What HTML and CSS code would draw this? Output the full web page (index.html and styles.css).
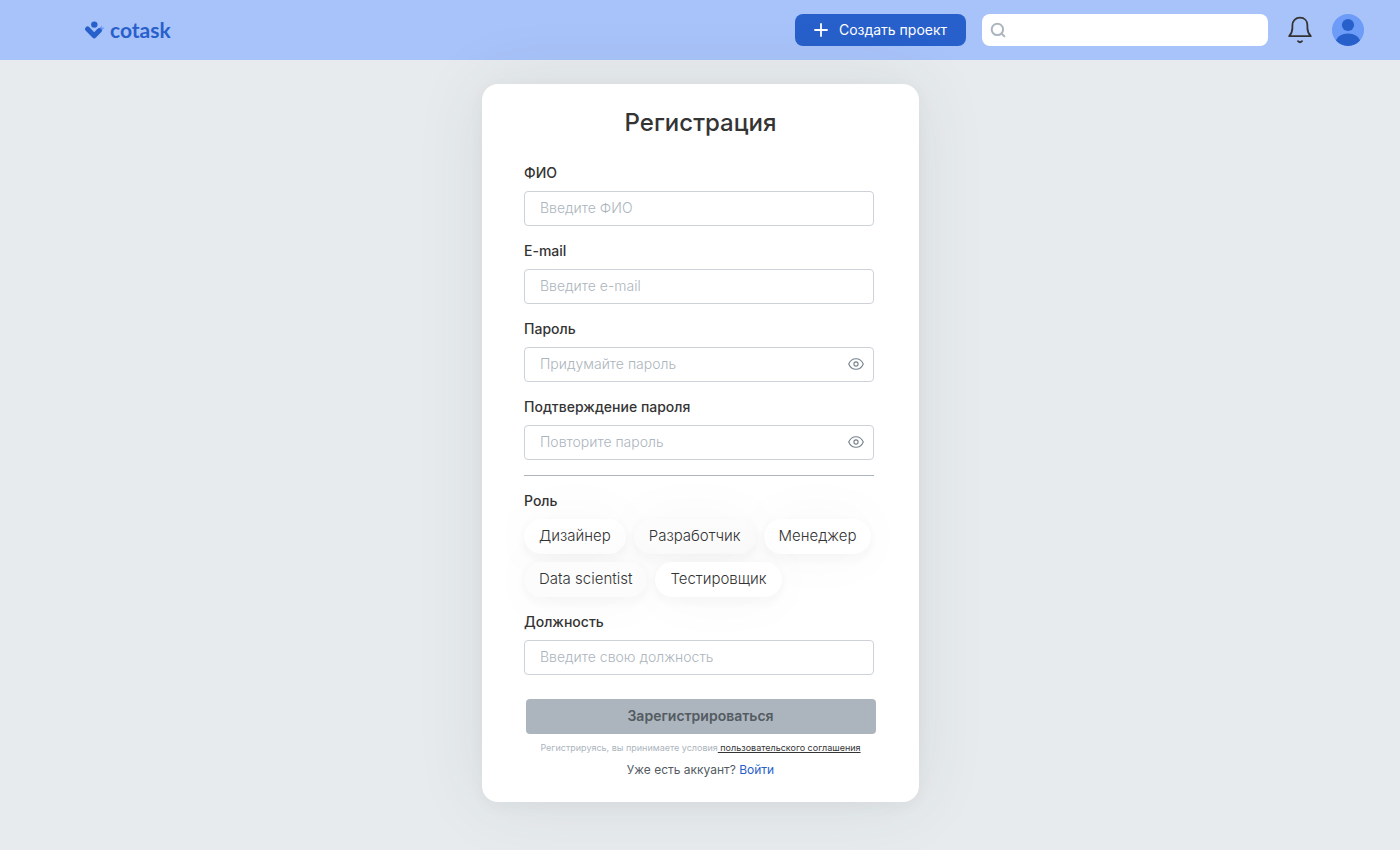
FILE: index.html
```html
<!DOCTYPE html>
<html lang="ru">
<head>
<meta charset="utf-8">
<meta name="viewport" content="width=device-width, initial-scale=1">
<title>Регистрация — cotask</title>
<link rel="stylesheet" href="styles.css">
</head>
<body>
<header class="topbar">
  <a class="logo" href="#">
    <svg class="logo-mark" width="20" height="18" viewBox="0 0 20 18" aria-hidden="true">
      <path d="M12.400 9L17 4.400V6.500H19.600L14 12.800Z" fill="#6c9cf8"/>
      <path d="M2.600 8L9.200 14.800L14.300 9.600" fill="none" stroke="#2860cb" stroke-width="5" stroke-linecap="round" stroke-linejoin="round"/>
      <circle cx="9.300" cy="4.200" r="3.900" fill="#a8c3f9"/>
      <circle cx="9.300" cy="3.600" r="3.200" fill="#2860cb"/>
    </svg>
    <span>cotask</span>
  </a>
  <div class="tools">
    <button class="create" type="button">
      <svg width="14" height="14" viewBox="0 0 14 14" aria-hidden="true"><path d="M7 1v12M1 7h12" stroke="#fff" stroke-width="1.800" stroke-linecap="round"/></svg>
      <span>Создать проект</span>
    </button>
    <label class="search">
      <svg width="16" height="16" viewBox="0 0 16 16" aria-hidden="true"><circle cx="7.400" cy="7.400" r="5.700" fill="none" stroke="#acb5bd" stroke-width="2"/><path d="M11.600 11.600L14.300 14.200" stroke="#acb5bd" stroke-width="2" stroke-linecap="round"/></svg>
      <input type="search" aria-label="Поиск">
    </label>
    <button class="bell" type="button" aria-label="Уведомления">
      <svg width="24" height="28" viewBox="0 0 24 28" fill="none" stroke="#343434" stroke-width="1.800" stroke-linecap="round" stroke-linejoin="round" aria-hidden="true"><path d="M1.200 20.200C3.500 17.500 4.400 15.500 4.400 12V9.200C4.400 4.800 7.600 1.700 12 1.700S19.400 4.800 19.400 9.200V12C19.400 15.500 20.300 17.500 22.800 20.200Z"/><path d="M10 25.200Q12 27.200 14 25.200"/></svg>
    </button>
    <button class="avatar" type="button" aria-label="Профиль">
      <svg width="32" height="32" viewBox="0 0 32 32" aria-hidden="true"><circle cx="16" cy="16" r="16" fill="#6c9cf8"/><circle cx="16" cy="11" r="6.100" fill="#2860cb"/><path d="M4 26.500C5.400 22.400 9.700 19.500 16 19.500S26.600 22.400 28 26.500A16 16 0 0 1 4 26.500Z" fill="#2860cb"/></svg>
    </button>
  </div>
</header>
<main class="page">
  <form class="card">
    <h1 class="title">Регистрация</h1>
    <div class="field">
      <label class="label" for="name">ФИО</label>
      <input class="input" id="name" type="text" placeholder="Введите ФИО">
    </div>
    <div class="field">
      <label class="label" for="email">E-mail</label>
      <input class="input" id="email" type="email" placeholder="Введите e-mail">
    </div>
    <div class="field">
      <label class="label" for="password">Пароль</label>
      <div class="secret">
        <input class="input" id="password" type="password" placeholder="Придумайте пароль">
        <button class="eye" type="button" aria-label="Показать пароль">
          <svg width="16" height="12" viewBox="0 0 16 12" fill="none" stroke="#75808a" stroke-width="1.100" aria-hidden="true"><path d="M.7 6C2.200 2.500 4.800.7 8 .7S13.800 2.500 15.300 6C13.800 9.500 11.200 11.300 8 11.300S2.200 9.500.7 6Z"/><circle cx="8" cy="6" r="2.100"/></svg>
        </button>
      </div>
    </div>
    <div class="field">
      <label class="label" for="repeat">Подтверждение пароля</label>
      <div class="secret">
        <input class="input" id="repeat" type="password" placeholder="Повторите пароль">
        <button class="eye" type="button" aria-label="Показать пароль">
          <svg width="16" height="12" viewBox="0 0 16 12" fill="none" stroke="#75808a" stroke-width="1.100" aria-hidden="true"><path d="M.7 6C2.200 2.500 4.800.7 8 .7S13.800 2.500 15.300 6C13.800 9.500 11.200 11.300 8 11.300S2.200 9.500.7 6Z"/><circle cx="8" cy="6" r="2.100"/></svg>
        </button>
      </div>
    </div>
    <hr class="divider">
    <div class="field" role="group" aria-labelledby="role-label">
      <span class="label" id="role-label">Роль</span>
      <div class="chips">
        <button class="chip" type="button">Дизайнер</button>
        <button class="chip chip-soft" type="button">Разработчик</button>
        <button class="chip" type="button">Менеджер</button>
        <button class="chip chip-soft" type="button">Data scientist</button>
        <button class="chip" type="button">Тестировщик</button>
      </div>
    </div>
    <div class="field">
      <label class="label" for="position">Должность</label>
      <input class="input" id="position" type="text" placeholder="Введите свою должность">
    </div>
    <button class="submit" type="submit">Зарегистрироваться</button>
    <p class="terms">Регистрируясь, вы принимаете условия<a href="#"> пользовательского соглашения</a></p>
    <p class="login">Уже есть аккуант? <a href="#">Войти</a></p>
  </form>
</main>
</body>
</html>
```
FILE: styles.css
```css
* { box-sizing: border-box; }

body {
  margin: 0;
  min-height: 100vh;
  background: #e7ebee;
  color: #343434;
  font: 14px/18px Inter, "Open Sans", sans-serif;
}

button, input { font: inherit; color: inherit; }

button {
  border: 0;
  padding: 0;
  background: none;
  cursor: pointer;
}

svg { display: block; flex: none; }

.topbar {
  display: flex;
  align-items: center;
  justify-content: space-between;
  height: 60px;
  padding: 0 36px 0 85px;
  background: #a8c3f9;
}

.logo {
  display: flex;
  align-items: center;
  gap: 5px;
  color: #2860cb;
  font: 700 21px/24px Lato, sans-serif;
  text-decoration: none;
}

.tools { display: flex; align-items: center; }

.create {
  display: flex;
  align-items: center;
  justify-content: center;
  gap: 11px;
  height: 32px;
  min-width: 171px;
  padding: 0 16px;
  border-radius: 8px;
  background: #2860cb;
  color: #fff;
}

.search {
  display: flex;
  align-items: center;
  gap: 8px;
  width: 286px;
  height: 32px;
  margin-left: 16px;
  padding: 0 8px;
  border-radius: 8px;
  background: #fff;
}

.search input {
  flex: 1;
  min-width: 0;
  border: 0;
  outline: 0;
  background: none;
}

.bell { margin-left: 20px; }
.avatar { margin-left: 20px; }

.page {
  display: flex;
  justify-content: center;
  padding: 24px 15px 48px 16px;
}

.card {
  display: flex;
  flex-direction: column;
  width: 100%;
  max-width: 437px;
  padding: 23px 42px;
  border-radius: 16px;
  background: #fff;
  box-shadow: 0 4px 16px rgba(52, 52, 52, .04), 0 0 72px rgba(52, 62, 70, .09);
}

.title {
  margin: 0 0 25px;
  font-size: 24px;
  font-weight: 500;
  line-height: 32px;
  text-align: center;
}

.field {
  display: flex;
  flex-direction: column;
  gap: 9px;
  margin-bottom: 16px;
}

.label { font-weight: 500; }

.input {
  width: 100%;
  max-width: 350px;
  height: 35px;
  padding: 0 15px 2px;
  border: 1px solid #cdd2d8;
  border-radius: 4px;
  background: #fff;
}

.input::placeholder { color: #acb5bd; font-weight: 300; opacity: 1; }

.secret {
  position: relative;
  max-width: 350px;
}

.secret .input { display: block; padding-right: 36px; }

.eye {
  position: absolute;
  top: 0;
  right: 10px;
  height: 34px;
}

.divider {
  width: 100%;
  max-width: 350px;
  height: 1px;
  margin: -1px 0 16px;
  border: 0;
  background: #acb5bd;
}

.chips {
  display: flex;
  flex-wrap: wrap;
  gap: 8px;
}

.chip {
  height: 35px;
  padding: 0 15px 2px;
  border-radius: 18px;
  background: #fff;
  font-size: 15px;
  font-weight: 300;
  box-shadow: 0 4px 12px rgba(52, 52, 52, .04), 0 0 56px rgba(52, 52, 52, .04);
}

.chip-soft { background: #fcfcfc; }

.submit {
  align-self: center;
  width: 100%;
  max-width: 350px;
  height: 35px;
  margin-top: 8px;
  padding-bottom: 2px;
  border-radius: 4px;
  background: #acb5bd;
  color: #545b62;
  font-weight: 600;
}

.terms {
  margin: 5px 0 0;
  color: #acb5bd;
  font-size: 9px;
  text-align: center;
}

.terms a { color: #343434; }

.login {
  margin: 4px 0 0;
  color: #545b62;
  font-size: 12px;
  text-align: center;
}

.login a { color: #2860cb; text-decoration: none; }
```
